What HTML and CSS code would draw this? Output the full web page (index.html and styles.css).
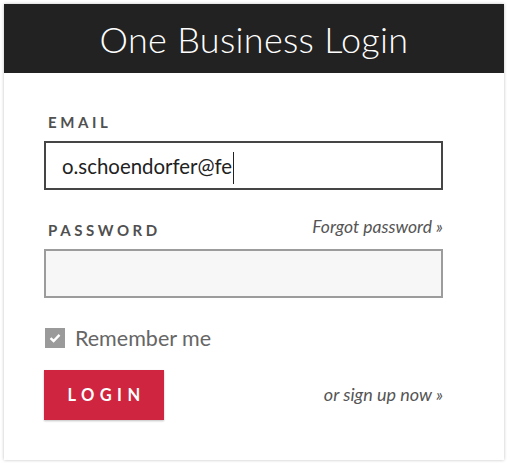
FILE: index.html
```html
<!DOCTYPE html>
<html>
<head>
<meta charset="utf-8">
<link rel="stylesheet" href="styles.css">
</head>
<body>
<div class="card">
  <div class="header"><h1>One Business Login</h1></div>
  <form class="form">
    <div class="field">
      <div class="label-row"><label class="label">EMAIL</label></div>
      <div class="input focused"><span class="value">o.schoendorfer@fe</span><span class="caret"></span></div>
    </div>
    <div class="field">
      <div class="label-row"><label class="label">PASSWORD</label><a class="link forgot">Forgot password »</a></div>
      <div class="input empty"></div>
    </div>
    <div class="remember">
      <span class="check"><svg width="12" height="10" viewBox="0 0 12 10"><path d="M1.5 5.2 L4.6 8 L10.5 1.8" fill="none" stroke="#fff" stroke-width="2.4"/></svg></span>
      <span class="remember-text">Remember me</span>
    </div>
    <div class="actions">
      <button type="button" class="btn">LOGIN</button>
      <a class="link signup">or sign up now »</a>
    </div>
  </form>
</div>
</body>
</html>
```
FILE: styles.css
```css
* { box-sizing: border-box; }
html, body { margin: 0; padding: 0; background: #fff; }
body { font-family: Lato, "Open Sans", sans-serif; }
.card {
  margin: 4px;
  width: 500px;
  height: 456px;
  background: #fff;
  box-shadow: 0 0 3px rgba(0,0,0,0.25);
}
.header {
  height: 69px;
  background: #222222;
  display: flex;
  align-items: center;
  justify-content: center;
}
.header h1 {
  margin: 0;
  color: #fff;
  font-weight: 300;
  font-size: 36px;
  letter-spacing: 0.3px;
  line-height: 1;
}
.form {
  padding: 39px 61px 0 40px;
}
.field + .field { margin-top: 30px; }
.label-row {
  display: flex;
  justify-content: space-between;
  align-items: center;
  height: 20px;
  margin-bottom: 9px;
}
.label {
  margin-left: 4px;
  font-size: 15px;
  font-weight: 700;
  letter-spacing: 3.6px;
  color: #505050;
  line-height: 1;
}
.link {
  font-style: italic;
  font-size: 17.5px;
  color: #555;
  line-height: 1;
}
.forgot { margin-bottom: 7px; }
.input {
  height: 49px;
  display: flex;
  align-items: center;
  padding-left: 16px;
}
.focused { border: 2px solid #454545; background: #fff; }
.empty { border: 2px solid #9c9c9c; background: #f7f7f7; }
.value { font-size: 20.4px; color: #222; }
.caret { width: 1px; height: 32px; background: #222; margin-left: 1px; margin-top: 4px; }
.remember {
  display: flex;
  align-items: center;
  margin-top: 30px;
  margin-left: 1px;
  height: 20px;
}
.check {
  width: 20px;
  height: 20px;
  background: #9a9a9a;
  display: flex;
  align-items: center;
  justify-content: center;
}
.remember-text {
  margin-left: 10px;
  font-size: 21.5px;
  color: #666;
}
.actions {
  display: flex;
  justify-content: space-between;
  align-items: center;
  margin-top: 22px;
}
.btn {
  width: 120px;
  height: 50px;
  background: #cf2540;
  border: none;
  color: #fff;
  font-family: Lato, sans-serif;
  font-weight: 700;
  font-size: 16.5px;
  letter-spacing: 5.4px;
  padding: 0 0 0 5px;
  box-shadow: 0 1px 2px rgba(0,0,0,0.25);
}
.signup { font-size: 18px; margin-bottom: 3px; }
```
